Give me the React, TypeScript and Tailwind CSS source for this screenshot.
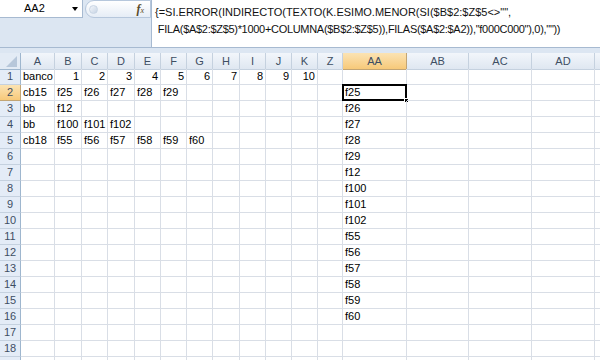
import React from "react";

const cols = ["A", "B", "C", "D", "E", "F", "G", "H", "I", "J", "K", "Z", "AA", "AB", "AC", "AD", ""];
const widths = "21px 34px 27px 26px 27px 26px 26px 26px 27px 26px 26px 26px 25px 64px 62px 63px 63px 40px";

const data: Record<number, (string | number)[]> = {
  1: ["banco", 1, 2, 3, 4, 5, 6, 7, 8, 9, 10],
  2: ["cb15", "f25", "f26", "f27", "f28", "f29"],
  3: ["bb", "f12"],
  4: ["bb", "f100", "f101", "f102"],
  5: ["cb18", "f55", "f56", "f57", "f58", "f59", "f60"],
};

const result = ["f25", "f26", "f27", "f28", "f29", "f12", "f100", "f101", "f102", "f55", "f56", "f57", "f58", "f59", "f60"];

export default function App() {
  const rows = Array.from({ length: 19 }, (_, i) => i + 1);

  return (
    <div className="w-[600px] h-[360px] overflow-hidden bg-white text-[11px] text-black" style={{ fontFamily: '"Liberation Sans", Arial, sans-serif' }}>
      {/* Formula bar */}
      <div className="flex h-[48px] bg-[#dce6f2] border-b border-[#a7bad1]">
        <div className="w-[151px] flex flex-col">
          <div className="flex h-[18px] items-center">
            <div className="w-[83px] h-[18px] bg-white border-b border-r border-[#a7bad1] flex items-center relative">
              <span className="ml-[24px]">AA2</span>
              <span className="absolute left-[72px] top-[7px] w-0 h-0 border-l-[3px] border-r-[3px] border-t-[4px] border-l-transparent border-r-transparent border-t-black" />
            </div>
            <div className="flex-1 h-[18px] ml-[2px] rounded-l-full bg-gradient-to-b from-white to-[#e6edf6] border border-[#b6c7dc] flex items-center justify-between pl-[3px] pr-[6px]">
              <span className="w-[9px] h-[9px] rounded-full bg-gradient-to-br from-[#f4f7fb] to-[#c7d4e4] border border-[#c9d5e4]" />
              <span className="italic font-bold text-[12px] text-[#5a4a2a]" style={{ fontFamily: '"Liberation Serif", serif' }}>
                f<span className="text-[8px] font-normal">x</span>
              </span>
            </div>
          </div>
        </div>
        <div className="flex-1 bg-white border-l border-[#a7bad1] pl-[3px] pt-[4px] leading-[17px] text-[#111] whitespace-pre">
          <div>{'{=SI.ERROR(INDIRECTO(TEXTO(K.ESIMO.MENOR(SI($B$2:$Z$5<>"",'}</div>
          <div className="tracking-[-0.3px]">{' FILA($A$2:$Z$5)*1000+COLUMNA($B$2:$Z$5)),FILAS($A$2:$A2)),"f000C000"),0),""))'}</div>
        </div>
      </div>
      <div className="h-[5px] bg-[#dce6f2]" />

      {/* Sheet */}
      <div className="grid" style={{ gridTemplateColumns: widths, gridAutoRows: "16px" }}>
        {/* header row */}
        <div className="h-[17px] bg-[#e3ebf5] border-r border-b border-[#9eb6ce] relative overflow-hidden">
          <span className="absolute right-[3px] bottom-[2px] w-0 h-0 border-b-[11px] border-l-[11px] border-b-[#b7c7da] border-l-transparent" />
        </div>
        {cols.map((c) => (
          <div
            key={c || "x"}
            className={`h-[17px] flex items-center justify-center border-r border-b text-[#3e4e63] ${
              c === "AA" ? "bg-gradient-to-b from-[#fbe3b3] to-[#f7c979] border-[#c2a575]" : "bg-gradient-to-b from-[#f2f6fb] to-[#dfe7f1] border-[#c5d1df]"
            }`}
          >
            {c}
          </div>
        ))}

        {rows.map((r) => {
          const vals = data[r] || [];
          return (
            <React.Fragment key={r}>
              <div
                className={`flex items-center justify-center border-r border-b text-[#3e4e63] ${
                  r === 2 ? "bg-gradient-to-b from-[#fbe3b3] to-[#f7c979] border-[#c2a575]" : "bg-[#e4ecf7] border-[#c5d1df] border-r-[#9eb6ce]"
                }`}
              >
                {r < 19 ? r : ""}
              </div>
              {cols.map((c, ci) => {
                let v: string | number | undefined = ci < vals.length ? vals[ci] : undefined;
                if (c === "AA" && r >= 2 && r - 2 < result.length) v = result[r - 2];
                const num = typeof v === "number";
                const sel = c === "AA" && r === 2;
                return (
                  <div
                    key={c || "x"}
                    className={`relative border-r border-b border-[#d9dee6] flex items-center px-[2px] whitespace-nowrap ${num ? "justify-end" : ""}`}
                  >
                    {v}
                    {sel && (
                      <>
                        <span className="absolute -left-[1px] -top-[1px] -right-[1px] -bottom-[1px] border-2 border-black" />
                        <span className="absolute -right-[3px] -bottom-[3px] w-[5px] h-[5px] bg-black border border-white" />
                      </>
                    )}
                  </div>
                );
              })}
            </React.Fragment>
          );
        })}
      </div>
    </div>
  );
}
